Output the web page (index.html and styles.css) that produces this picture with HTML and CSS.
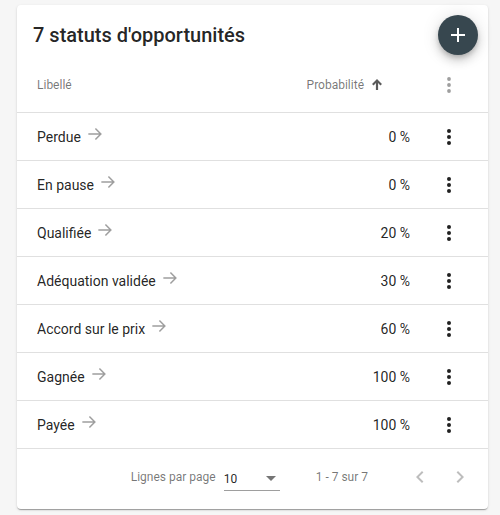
FILE: index.html
```html
<!DOCTYPE html>
<html lang="fr">
<head>
<meta charset="utf-8">
<title>Statuts d'opportunités</title>
<link rel="stylesheet" href="styles.css">
</head>
<body>
<div class="page">
  <div class="card">
    <div class="card-head">
      <h1 class="title">7 statuts d'opportunités</h1>
      <button class="fab" aria-label="Ajouter">
        <svg viewBox="0 0 24 24" width="24" height="24"><path d="M19 13h-6v6h-2v-6H5v-2h6V5h2v6h6v2z" fill="#fff"/></svg>
      </button>
    </div>

    <div class="row head-row">
      <div class="cell c-label">Libellé</div>
      <div class="cell c-prob head-prob">Probabilité
        <svg class="sort" viewBox="0 0 10 11" width="10" height="11"><path d="M5 0L10 5L8.4 6.4L6.1 4.1V11H3.9V4.1L1.6 6.4L0 5Z"/></svg>
      </div>
      <div class="cell c-act">
        <svg class="kebab head-kebab" viewBox="0 0 24 24" width="24" height="24"><circle cx="12" cy="6" r="1.9"/><circle cx="12" cy="12" r="1.9"/><circle cx="12" cy="18" r="1.9"/></svg>
      </div>
    </div>

    <div class="row">
      <div class="cell c-label">Perdue<svg class="go" viewBox="0 0 24 24" width="20" height="20"><path d="M4 12h15M12.5 5.5L19 12l-6.5 6.5"/></svg></div>
      <div class="cell c-prob">0 %</div>
      <div class="cell c-act"><svg class="kebab" viewBox="0 0 24 24" width="24" height="24"><circle cx="12" cy="6" r="2"/><circle cx="12" cy="12" r="2"/><circle cx="12" cy="18" r="2"/></svg></div>
    </div>
    <div class="row">
      <div class="cell c-label">En pause<svg class="go" viewBox="0 0 24 24" width="20" height="20"><path d="M4 12h15M12.5 5.5L19 12l-6.5 6.5"/></svg></div>
      <div class="cell c-prob">0 %</div>
      <div class="cell c-act"><svg class="kebab" viewBox="0 0 24 24" width="24" height="24"><circle cx="12" cy="6" r="2"/><circle cx="12" cy="12" r="2"/><circle cx="12" cy="18" r="2"/></svg></div>
    </div>
    <div class="row">
      <div class="cell c-label">Qualifiée<svg class="go" viewBox="0 0 24 24" width="20" height="20"><path d="M4 12h15M12.5 5.5L19 12l-6.5 6.5"/></svg></div>
      <div class="cell c-prob">20 %</div>
      <div class="cell c-act"><svg class="kebab" viewBox="0 0 24 24" width="24" height="24"><circle cx="12" cy="6" r="2"/><circle cx="12" cy="12" r="2"/><circle cx="12" cy="18" r="2"/></svg></div>
    </div>
    <div class="row">
      <div class="cell c-label">Adéquation validée<svg class="go" viewBox="0 0 24 24" width="20" height="20"><path d="M4 12h15M12.5 5.5L19 12l-6.5 6.5"/></svg></div>
      <div class="cell c-prob">30 %</div>
      <div class="cell c-act"><svg class="kebab" viewBox="0 0 24 24" width="24" height="24"><circle cx="12" cy="6" r="2"/><circle cx="12" cy="12" r="2"/><circle cx="12" cy="18" r="2"/></svg></div>
    </div>
    <div class="row">
      <div class="cell c-label">Accord sur le prix<svg class="go" viewBox="0 0 24 24" width="20" height="20"><path d="M4 12h15M12.5 5.5L19 12l-6.5 6.5"/></svg></div>
      <div class="cell c-prob">60 %</div>
      <div class="cell c-act"><svg class="kebab" viewBox="0 0 24 24" width="24" height="24"><circle cx="12" cy="6" r="2"/><circle cx="12" cy="12" r="2"/><circle cx="12" cy="18" r="2"/></svg></div>
    </div>
    <div class="row">
      <div class="cell c-label">Gagnée<svg class="go" viewBox="0 0 24 24" width="20" height="20"><path d="M4 12h15M12.5 5.5L19 12l-6.5 6.5"/></svg></div>
      <div class="cell c-prob">100 %</div>
      <div class="cell c-act"><svg class="kebab" viewBox="0 0 24 24" width="24" height="24"><circle cx="12" cy="6" r="2"/><circle cx="12" cy="12" r="2"/><circle cx="12" cy="18" r="2"/></svg></div>
    </div>
    <div class="row">
      <div class="cell c-label">Payée<svg class="go" viewBox="0 0 24 24" width="20" height="20"><path d="M4 12h15M12.5 5.5L19 12l-6.5 6.5"/></svg></div>
      <div class="cell c-prob">100 %</div>
      <div class="cell c-act"><svg class="kebab" viewBox="0 0 24 24" width="24" height="24"><circle cx="12" cy="6" r="2"/><circle cx="12" cy="12" r="2"/><circle cx="12" cy="18" r="2"/></svg></div>
    </div>

    <div class="paginator">
      <span class="pg-label">Lignes par page</span>
      <div class="select">
        <span class="select-value">10</span>
        <span class="caret"></span>
      </div>
      <span class="range">1 - 7 sur 7</span>
      <button class="nav" aria-label="Précédent">
        <svg viewBox="0 0 24 24" width="24" height="24"><path d="M15.41 7.41L14 6l-6 6 6 6 1.41-1.41L10.83 12z"/></svg>
      </button>
      <button class="nav" aria-label="Suivant">
        <svg viewBox="0 0 24 24" width="24" height="24"><path d="M10 6L8.59 7.41 13.17 12l-4.58 4.59L10 18l6-6z"/></svg>
      </button>
    </div>
  </div>
</div>
</body>
</html>
```

FILE: styles.css
```css
html, body {
  margin: 0;
  padding: 0;
  background: #f6f6f6;
  font-family: Roboto, "Liberation Sans", Arial, sans-serif;
  color: rgba(0, 0, 0, 0.87);
}

.page {
  padding: 5px 12px 6px 17px;
}

.card {
  width: 471px;
  background: #fff;
  border-radius: 4px;
  box-shadow: 0 2px 1px -1px rgba(0,0,0,.2), 0 1px 1px 0 rgba(0,0,0,.14), 0 1px 3px 0 rgba(0,0,0,.12);
  padding-bottom: 4px;
  box-sizing: border-box;
}

.card-head {
  height: 51px;
  display: flex;
  justify-content: space-between;
  align-items: flex-start;
  padding: 10px 10px 0 16px;
  box-sizing: border-box;
}

.title {
  margin: 4px 0 0;
  font-size: 20px;
  font-weight: 500;
  line-height: 32px;
  letter-spacing: 0;
  color: rgba(0, 0, 0, 0.87);
}

.fab {
  width: 40px;
  height: 40px;
  border-radius: 50%;
  border: none;
  padding: 0;
  background: #37474f;
  display: flex;
  align-items: center;
  justify-content: center;
  box-shadow: 0 3px 5px -1px rgba(0,0,0,.2), 0 6px 10px 0 rgba(0,0,0,.14), 0 1px 18px 0 rgba(0,0,0,.12);
}

.row {
  display: flex;
  align-items: center;
  height: 48px;
  border-bottom: 1px solid #e0e0e0;
  font-size: 14px;
  box-sizing: border-box;
}

.head-row {
  height: 57px;
  padding-top: 2px;
  font-size: 12px;
  font-weight: 400;
  color: rgba(0, 0, 0, 0.54);
}

.cell {
  display: flex;
  align-items: center;
}

.c-label {
  flex: 1;
  padding-left: 20px;
}

.c-prob {
  justify-content: flex-end;
  width: 160px;
}

.head-prob {
  padding-right: 28px;
  box-sizing: border-box;
}

.sort {
  margin-left: 8px;
  margin-top: -2px;
  fill: #5a5a5a;
}

.c-act {
  width: 78px;
  justify-content: center;
  box-sizing: border-box;
}

.kebab {
  fill: rgba(0, 0, 0, 0.87);
  display: block;
}

.head-kebab {
  fill: #9e9e9e;
}

.go {
  margin-left: 4px;
  margin-top: -6px;
  fill: none;
  stroke: #9e9e9e;
  stroke-width: 1.8;
}

.paginator {
  height: 56px;
  display: flex;
  align-items: center;
  justify-content: flex-end;
  padding-right: 8px;
  font-size: 12px;
  color: rgba(0, 0, 0, 0.54);
}

.pg-label {
  margin-right: 8px;
}

.select {
  width: 56px;
  height: 24px;
  display: flex;
  align-items: center;
  justify-content: space-between;
  border-bottom: 1px solid #9e9e9e;
  box-sizing: border-box;
  margin-top: 4px;
  padding-right: 4px;
}

.select-value {
  color: rgba(0, 0, 0, 0.87);
  font-size: 12px;
}

.caret {
  width: 0;
  height: 0;
  border-left: 5px solid transparent;
  border-right: 5px solid transparent;
  border-top: 5px solid #757575;
}

.range {
  margin: 0 32px 0 36px;
}

.nav {
  width: 40px;
  height: 40px;
  border: none;
  background: transparent;
  padding: 0;
  display: flex;
  align-items: center;
  justify-content: center;
}

.nav svg {
  fill: rgba(0, 0, 0, 0.26);
}
```
